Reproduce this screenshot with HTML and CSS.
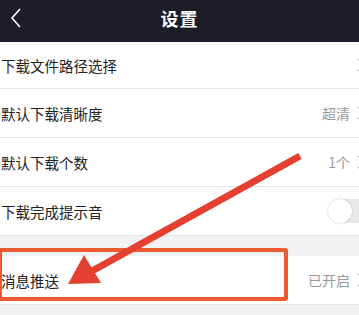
FILE: index.html
```html
<!DOCTYPE html>
<html lang="zh">
<head>
<meta charset="utf-8">
<link rel="stylesheet" href="styles.css">
</head>
<body>
<div class="page">
  <header class="topbar">
    <svg class="back" width="14" height="22" viewBox="0 0 14 22"><path d="M11 2 L3 11 L11 20" fill="none" stroke="#fff" stroke-width="1.6"/></svg>
    <h1 class="title">设置</h1>
  </header>
  <div class="group">
    <div class="row first"><span class="label">下载文件路径选择</span><span class="right"><svg class="chev" width="8" height="14" viewBox="0 0 8 14"><path d="M1 1 L7 7 L1 13" fill="none" stroke="#bbb" stroke-width="1.4"/></svg></span></div>
    <div class="row"><span class="label">默认下载清晰度</span><span class="right"><span class="value">超清</span><svg class="chev" width="8" height="14" viewBox="0 0 8 14"><path d="M1 1 L7 7 L1 13" fill="none" stroke="#bbb" stroke-width="1.4"/></svg></span></div>
    <div class="row"><span class="label">默认下载个数</span><span class="right"><span class="value">1个</span><svg class="chev" width="8" height="14" viewBox="0 0 8 14"><path d="M1 1 L7 7 L1 13" fill="none" stroke="#bbb" stroke-width="1.4"/></svg></span></div>
    <div class="row"><span class="label">下载完成提示音</span><span class="switch"><span class="knob"></span></span></div>
  </div>
  <div class="group gap">
    <div class="row"><span class="label">消息推送</span><span class="right"><span class="value">已开启</span><svg class="chev" width="8" height="14" viewBox="0 0 8 14"><path d="M1 1 L7 7 L1 13" fill="none" stroke="#bbb" stroke-width="1.4"/></svg></span></div>
  </div>
  <div class="highlight"></div>
  <svg class="arrow" width="359" height="315" viewBox="0 0 359 315">
    <line x1="300" y1="156" x2="92" y2="271" stroke="#e5402f" stroke-width="7" stroke-linecap="butt"/>
    <polygon points="68,284 84,255 101,283" fill="#e5402f"/>
  </svg>
</div>
</body>
</html>
```
FILE: styles.css
```css
* { box-sizing: border-box; margin: 0; padding: 0; }
html, body { width: 359px; height: 315px; overflow: hidden; }
body { background: #f2f2f4; font-family: "Noto Sans CJK SC", "Noto Sans", sans-serif; }
.page { position: relative; width: 359px; height: 315px; overflow: hidden; }
.topbar { height: 42px; background: #1c1d29; display: flex; align-items: center; justify-content: center; position: relative; }
.back { position: absolute; left: 9px; top: 7px; }
.title { color: #fff; font-size: 18px; font-weight: 700; letter-spacing: 1px; line-height: 1; margin-top: -6px; }
.group { background: #fff; }
.gap { margin-top: 20px; }
.row { height: 49px; border-bottom: 1px solid #e6e6e8; display: flex; align-items: center; justify-content: space-between; padding-left: 1px; }
.row.first { height: 47px; }
.label { font-size: 14.5px; color: #222; }
.right { display: flex; align-items: center; gap: 7px; margin-right: -6px; }
.value { font-size: 14px; color: #999; }
.chev { display: block; }
.switch { width: 52px; height: 24px; border-radius: 12px; background: #e9e9ea; margin-right: -21px; position: relative; }
.knob { position: absolute; left: 0; top: 0; width: 24px; height: 24px; border-radius: 50%; background: #fff; box-shadow: 0 0 2px rgba(0,0,0,0.25); }
.highlight { position: absolute; left: -2px; top: 248px; width: 290px; height: 53px; border: 4px solid #ee5a2f; border-radius: 3px; }
.arrow { position: absolute; left: 0; top: 0; }
```
